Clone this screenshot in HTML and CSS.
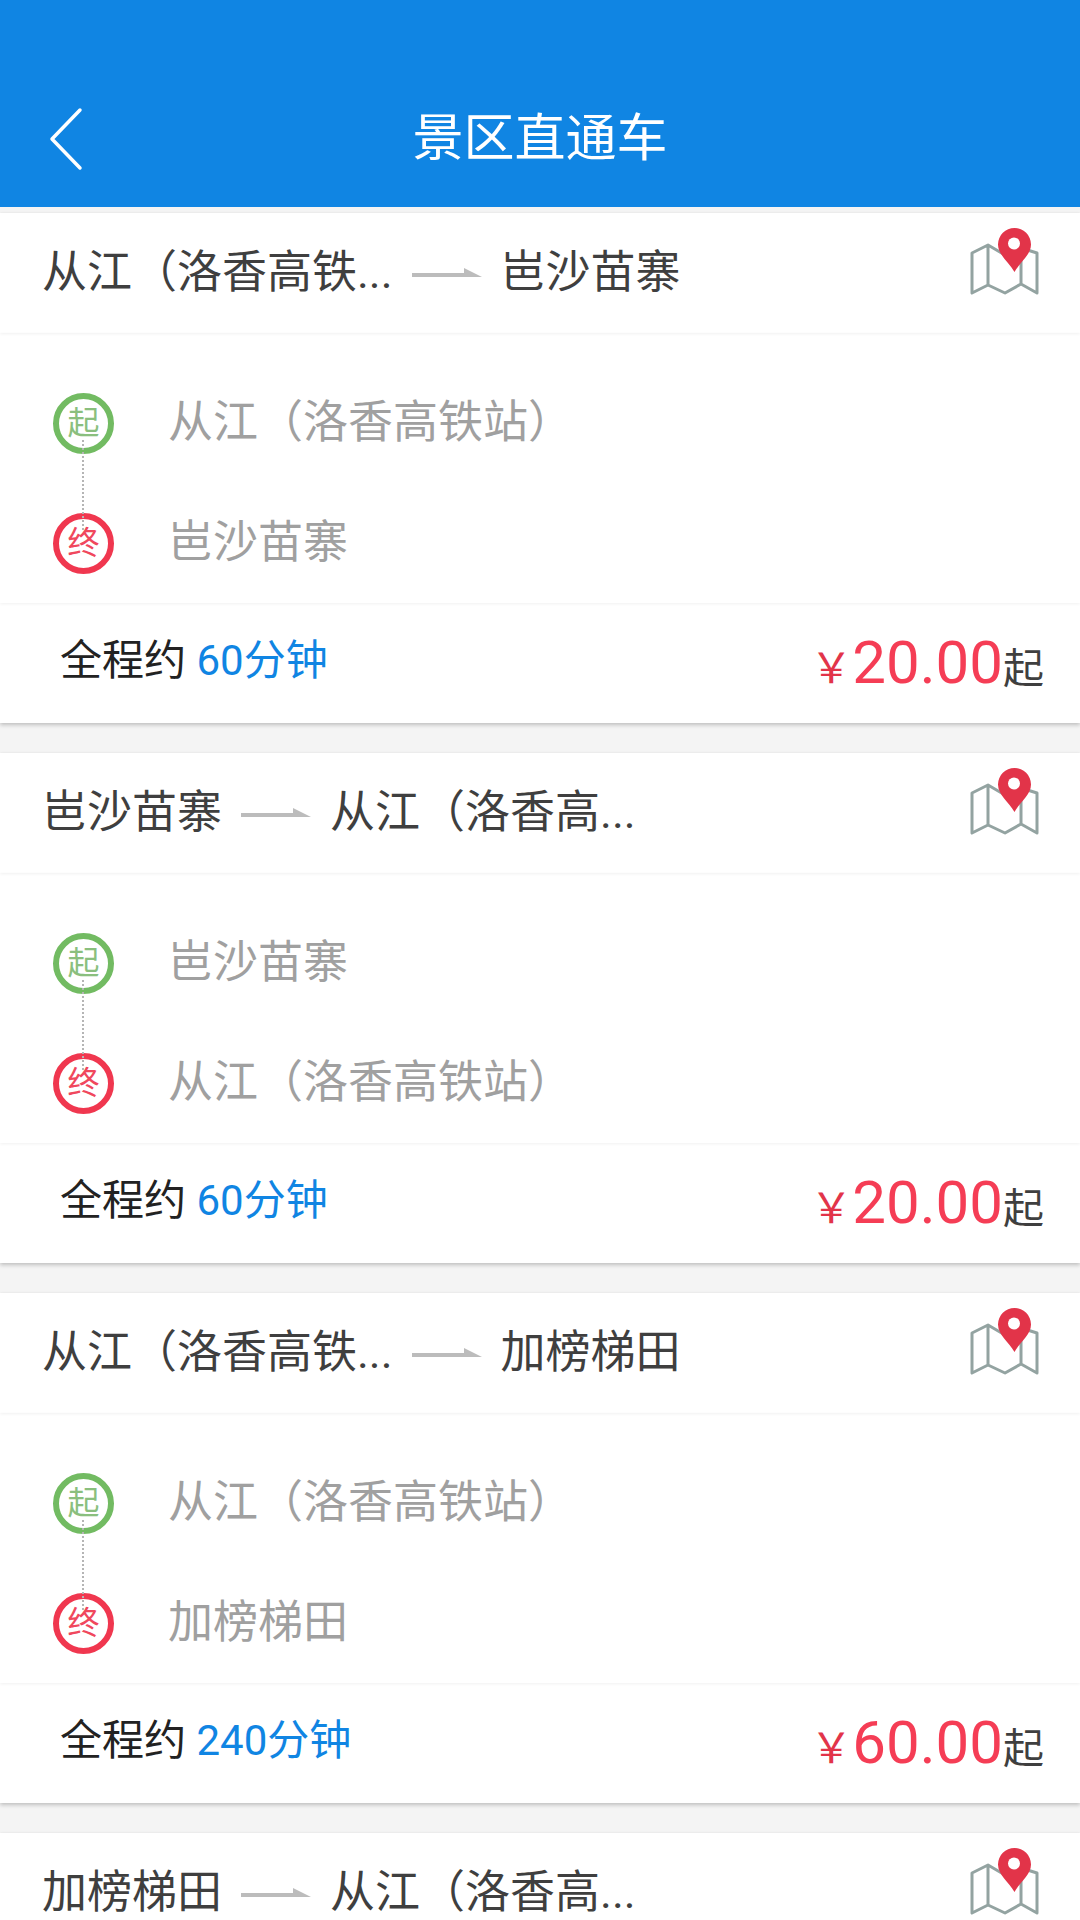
FILE: index.html
```html
<!DOCTYPE html>
<html lang="zh-CN">
<head>
<meta charset="utf-8">
<title>景区直通车</title>
<link rel="stylesheet" href="styles.css">
</head>
<body>
<svg class="defs" width="0" height="0" aria-hidden="true">
  <symbol id="map" viewBox="0 0 72 72">
    <path d="M5 29 L21 21 L38 31 L54 24 L70 29 L70 69 L54 60 L38 69 L21 61 L5 69 Z M21 21 L21 61 M54 30 L54 60" fill="none" stroke="#93a3a1" stroke-width="3" stroke-linejoin="round"/>
    <path d="M47.5 48 C42 38 31 31 31 20.5 A16.5 16.5 0 0 1 64 20.5 C64 31 53 38 47.5 48 Z" fill="#e23449"/>
    <circle cx="47" cy="19.500" r="6" fill="#fff"/>
  </symbol>
  <symbol id="arrow" viewBox="0 0 70 10">
    <path d="M0 5 H52 V0 L70 9 H0 Z" fill="#bcbcbc"/>
  </symbol>
</svg>

<header class="topbar">
  <svg class="back" width="36" height="66" viewBox="0 0 36 66"><path d="M32 4 L4 33 L32 62" fill="none" stroke="#fff" stroke-width="3.5" stroke-linecap="round" stroke-linejoin="round"/></svg>
  <h1 class="title">景区直通车</h1>
</header>

<main class="list">
  <article class="card">
    <div class="route">
      <span class="place">从江（洛香高铁...</span>
      <svg class="arrow"><use href="#arrow"/></svg>
      <span class="place">岜沙苗寨</span>
      <svg class="map"><use href="#map"/></svg>
    </div>
    <div class="stops">
      <div class="line"></div>
      <div class="stop"><span class="badge start">起</span><span class="stop-name">从江（洛香高铁站）</span></div>
      <div class="stop"><span class="badge end">终</span><span class="stop-name">岜沙苗寨</span></div>
    </div>
    <div class="foot">
      <div class="duration">全程约 <span class="mins">60分钟</span></div>
      <div class="price"><span class="yen">￥</span><span class="amount">20.00</span><span class="from">起</span></div>
    </div>
  </article>

  <article class="card">
    <div class="route">
      <span class="place">岜沙苗寨</span>
      <svg class="arrow"><use href="#arrow"/></svg>
      <span class="place">从江（洛香高...</span>
      <svg class="map"><use href="#map"/></svg>
    </div>
    <div class="stops">
      <div class="line"></div>
      <div class="stop"><span class="badge start">起</span><span class="stop-name">岜沙苗寨</span></div>
      <div class="stop"><span class="badge end">终</span><span class="stop-name">从江（洛香高铁站）</span></div>
    </div>
    <div class="foot">
      <div class="duration">全程约 <span class="mins">60分钟</span></div>
      <div class="price"><span class="yen">￥</span><span class="amount">20.00</span><span class="from">起</span></div>
    </div>
  </article>

  <article class="card">
    <div class="route">
      <span class="place">从江（洛香高铁...</span>
      <svg class="arrow"><use href="#arrow"/></svg>
      <span class="place">加榜梯田</span>
      <svg class="map"><use href="#map"/></svg>
    </div>
    <div class="stops">
      <div class="line"></div>
      <div class="stop"><span class="badge start">起</span><span class="stop-name">从江（洛香高铁站）</span></div>
      <div class="stop"><span class="badge end">终</span><span class="stop-name">加榜梯田</span></div>
    </div>
    <div class="foot">
      <div class="duration">全程约 <span class="mins">240分钟</span></div>
      <div class="price"><span class="yen">￥</span><span class="amount">60.00</span><span class="from">起</span></div>
    </div>
  </article>

  <article class="card card-cut">
    <div class="route">
      <span class="place">加榜梯田</span>
      <svg class="arrow"><use href="#arrow"/></svg>
      <span class="place">从江（洛香高...</span>
      <svg class="map"><use href="#map"/></svg>
    </div>
  </article>
</main>
</body>
</html>
```

FILE: styles.css
```css
* { box-sizing: border-box; }
html, body { margin: 0; padding: 0; }
body {
  width: 1080px;
  height: 1920px;
  overflow: hidden;
  background: #f4f4f4;
  font-family: Roboto, "Noto Sans CJK SC", sans-serif;
}
.defs { position: absolute; }
.topbar {
  height: 207px;
  background: #1085e3;
  position: relative;
  display: flex;
  justify-content: center;
  padding-top: 109px;
}
.back { position: absolute; left: 48px; top: 106px; }
.title {
  margin: 0;
  font-size: 51px;
  line-height: 60px;
  font-weight: 400;
  color: #fff;
}
.list {
  display: flex;
  flex-direction: column;
  gap: 30px;
  padding-top: 6px;
  height: 1713px;
  overflow: hidden;
}
.card {
  background: #fff;
  height: 510px;
  flex: none;
  box-shadow: 0 2px 4px rgba(0, 0, 0, .22);
}
.card-cut { height: 120px; }
.route {
  height: 120px;
  display: flex;
  align-items: center;
  padding-left: 42px;
  position: relative;
  box-shadow: 0 1px 3px rgba(0, 0, 0, .06);
}
.place {
  font-size: 45px;
  line-height: 60px;
  color: #3f3f3f;
  white-space: nowrap;
}
.arrow { width: 70px; height: 10px; margin: 0 19px; flex: none; }
.map { position: absolute; left: 967px; top: 11px; width: 72px; height: 72px; }
.stops {
  height: 270px;
  padding-top: 30px;
  position: relative;
  box-shadow: 0 1px 3px rgba(0, 0, 0, .06);
}
.line {
  position: absolute;
  z-index: 1;
  left: 82px;
  top: 107px;
  height: 90px;
  border-left: 2px dotted #b5b5b5;
}
.stop {
  height: 120px;
  display: flex;
  align-items: center;
  padding-left: 53px;
  position: relative;
}
.badge {
  width: 61px;
  height: 61px;
  border-radius: 50%;
  border: 6px solid;
  display: flex;
  align-items: center;
  justify-content: center;
  font-size: 32px;
  line-height: 1;
  flex: none;
  background: #fff;
}
.badge.start { color: #8abf7e; border-color: #72bb62; }
.badge.end { color: #f0475d; border-color: #f0374f; }
.stop-name {
  margin-left: 54px;
  font-size: 45px;
  line-height: 60px;
  color: #a0a0a0;
}
.foot {
  height: 120px;
  display: flex;
  justify-content: space-between;
  padding: 0 36px 0 60px;
  position: relative;
}
.duration {
  font-size: 42px;
  line-height: 56px;
  padding-top: 30px;
  color: #222;
}
.mins { color: #1085e3; }
.price {
  display: flex;
  align-items: baseline;
  padding-top: 25px;
  height: 100px;
}
.yen { font-size: 42px; color: #e23449; margin-right: 0; }
.amount { font-size: 60px; line-height: 70px; color: #f53d55; }
.from { font-size: 41px; color: #3f3f3f; }
```
